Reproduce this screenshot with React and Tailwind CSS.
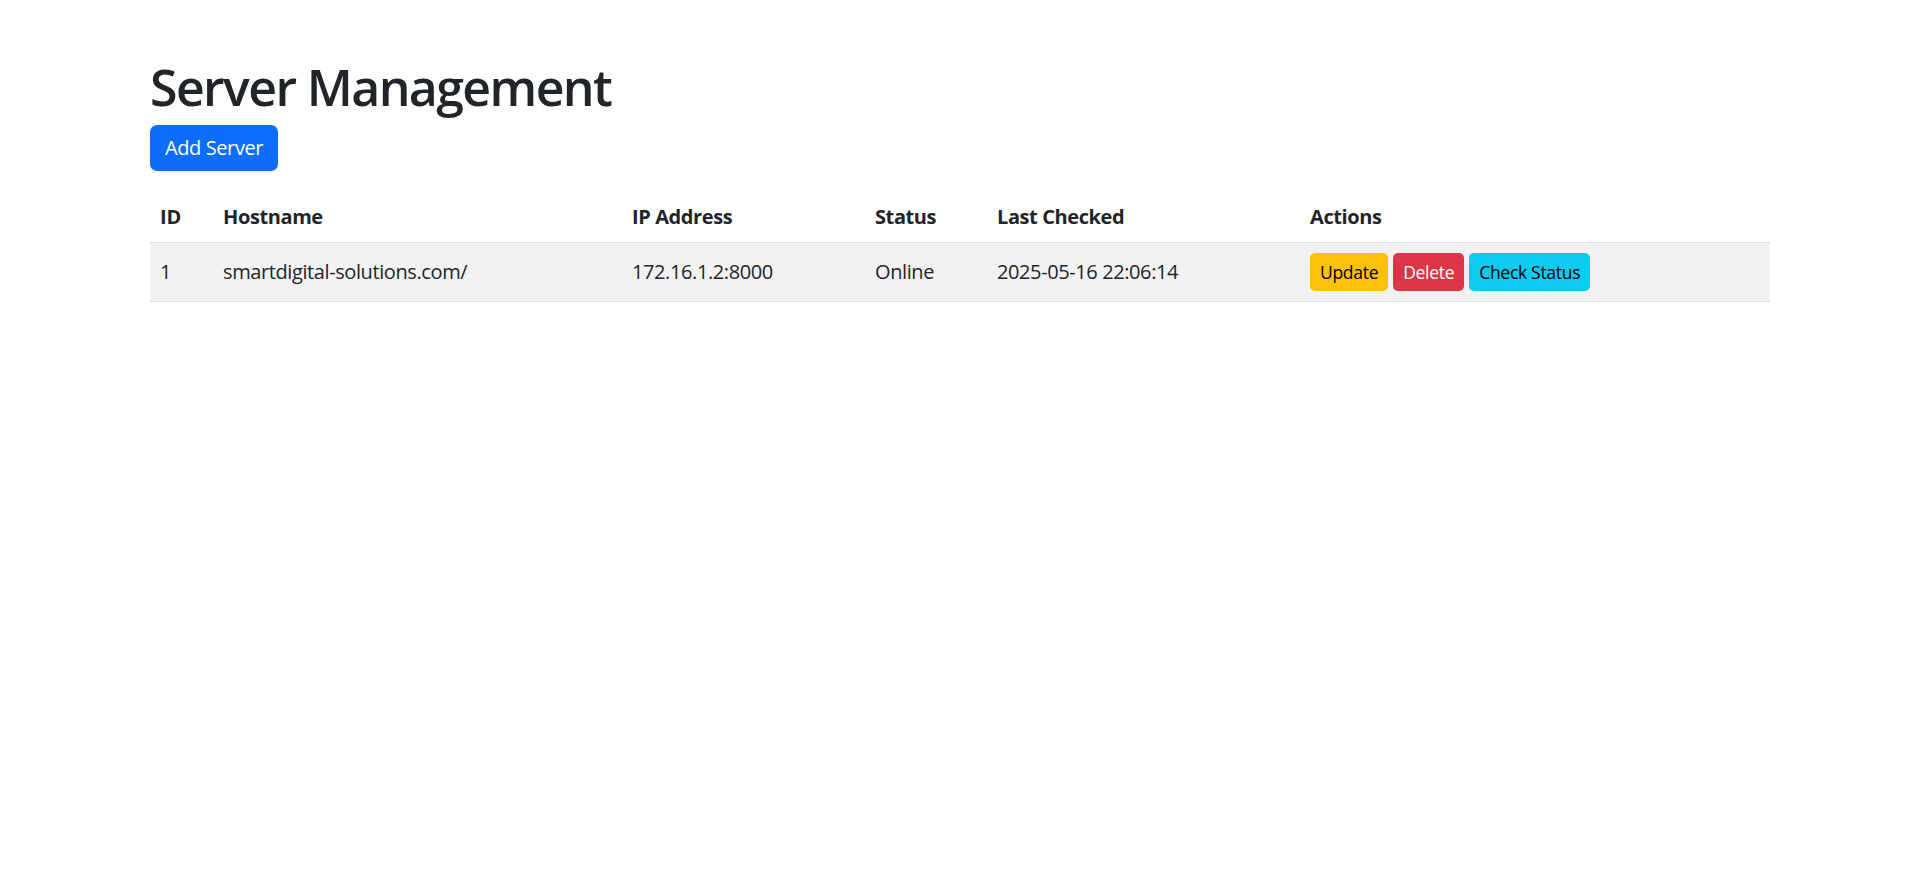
const servers = [
  {
    id: 1,
    hostname: 'smartdigital-solutions.com/',
    ip: '172.16.1.2:8000',
    status: 'Online',
    lastChecked: '2025-05-16 22:06:14',
  },
];

export default function App() {
  return (
    <div className="min-h-screen bg-white text-[#212529] font-['Open_Sans','Noto_Sans',sans-serif]">
      <div className="ml-[150px] w-[1620px] pt-[57px]">
        <h1 className="text-[50px] leading-[60px] font-semibold mb-[8px] tracking-[-1.6px]">Server Management</h1>
        <button className="bg-[#0d6efd] text-white text-[20px] leading-[30px] px-[15px] py-[8px] rounded-[7px] tracking-[-0.4px]">
          Add Server
        </button>

        <table className="mt-[21px] w-full table-fixed border-collapse text-[20px] leading-[30px]">
          <thead>
            <tr className="border-b border-[#dee2e6] text-left">
              <th className="w-[63px] p-[10px] font-bold">ID</th>
              <th className="w-[409px] p-[10px] font-bold tracking-[-0.4px]">Hostname</th>
              <th className="w-[243px] p-[10px] font-bold tracking-[-0.4px]">IP Address</th>
              <th className="w-[122px] p-[10px] font-bold tracking-[-0.4px]">Status</th>
              <th className="w-[313px] p-[10px] font-bold tracking-[-0.4px]">Last Checked</th>
              <th className="p-[10px] font-bold tracking-[-0.4px]">Actions</th>
            </tr>
          </thead>
          <tbody>
            {servers.map((s) => (
              <tr key={s.id} className="bg-[#f2f2f2] border-b border-[#dee2e6]">
                <td className="p-[10px]">{s.id}</td>
                <td className="p-[10px] tracking-[-0.4px]">{s.hostname}</td>
                <td className="p-[10px] tracking-[-0.4px]">{s.ip}</td>
                <td className="p-[10px] tracking-[-0.4px]">{s.status}</td>
                <td className="p-[10px] tracking-[-0.4px]">{s.lastChecked}</td>
                <td className="p-[10px]">
                  <div className="flex gap-[5px] text-[17.5px] leading-[26px] tracking-[-0.3px]">
                    <button className="bg-[#ffc107] text-black px-[10px] py-[6px] rounded-[5px]">Update</button>
                    <button className="bg-[#dc3545] text-white px-[10px] py-[6px] rounded-[5px]">Delete</button>
                    <button className="bg-[#0dcaf0] text-black px-[10px] py-[6px] rounded-[5px]">Check Status</button>
                  </div>
                </td>
              </tr>
            ))}
          </tbody>
        </table>
      </div>
    </div>
  );
}
